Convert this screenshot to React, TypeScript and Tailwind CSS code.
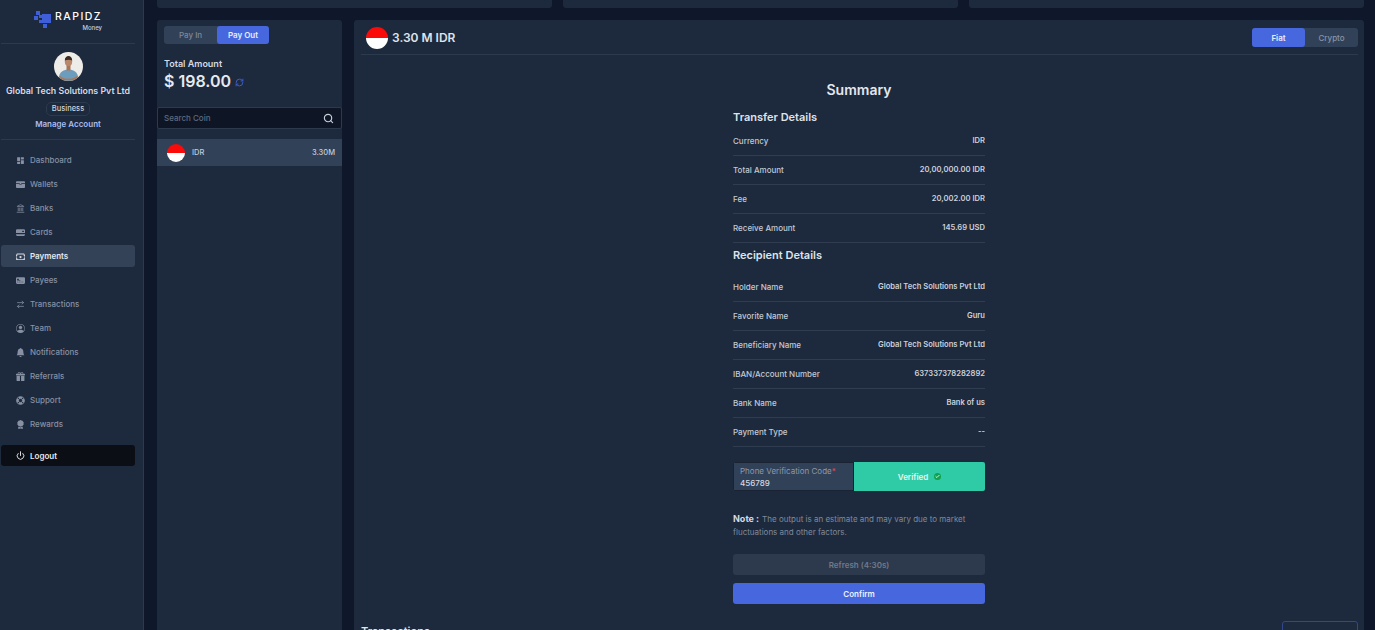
import { Check, Landmark, Power, RefreshCw, Search, ArrowRightLeft } from 'lucide-react';
import { BsCreditCard2BackFill, BsCreditCard2FrontFill, BsBellFill, BsGiftFill, BsWalletFill, BsCashStack, BsPersonCircle, BsAwardFill } from 'react-icons/bs';
import { FaLifeRing } from 'react-icons/fa';
import { RiDashboardFill } from 'react-icons/ri';

const NAV = [
  { label: 'Dashboard', icon: RiDashboardFill },
  { label: 'Wallets', icon: BsWalletFill },
  { label: 'Banks', icon: Landmark },
  { label: 'Cards', icon: BsCreditCard2BackFill },
  { label: 'Payments', icon: BsCashStack, active: true },
  { label: 'Payees', icon: BsCreditCard2FrontFill },
  { label: 'Transactions', icon: ArrowRightLeft },
  { label: 'Team', icon: BsPersonCircle },
  { label: 'Notifications', icon: BsBellFill },
  { label: 'Referrals', icon: BsGiftFill },
  { label: 'Support', icon: FaLifeRing },
  { label: 'Rewards', icon: BsAwardFill },
];

const TRANSFER = [
  ['Currency', 'IDR'],
  ['Total Amount', '20,00,000.00 IDR'],
  ['Fee', '20,002.00 IDR'],
  ['Receive Amount', '145.69 USD'],
];

const RECIPIENT = [
  ['Holder Name', 'Global Tech Solutions Pvt Ltd'],
  ['Favorite Name', 'Guru'],
  ['Beneficiary Name', 'Global Tech Solutions Pvt Ltd'],
  ['IBAN/Account Number', '637337378282892'],
  ['Bank Name', 'Bank of us'],
  ['Payment Type', '--'],
];

function Flag({ size }: { size: 'sm' | 'lg' }) {
  return (
    <div className={`flex shrink-0 flex-col overflow-hidden rounded-full ${size === 'lg' ? 'h-[22px] w-[22px]' : 'h-[18px] w-[18px]'}`}>
      <div className="flex-1 bg-[#fb0a0a]" />
      <div className="flex-1 bg-white" />
    </div>
  );
}

function Logo() {
  return (
    <div className="mx-[1px] flex h-[44px] w-[134px] items-start justify-center border-b border-[#2b3a4e] pt-[10px]">
      <svg width="20" height="20" viewBox="0 0 20 20" className="mr-[1px]">
        <g fill="#3f5fd8">
          <rect x="2" y="1" width="4" height="4" />
          <rect x="0" y="6" width="4" height="4" />
          <rect x="5" y="5" width="3" height="3" />
          <rect x="8" y="4" width="9" height="9" />
          <rect x="5" y="10" width="3" height="3" />
          <rect x="9" y="14" width="4" height="4" />
        </g>
      </svg>
      <div className="flex flex-col items-end pt-[1px]">
        <span className="text-[10.500px] font-medium leading-[12px] tracking-[1.500px] text-white">RAPIDZ</span>
        <span className="mt-[1px] text-[6px] font-medium leading-[8px] text-[#cbd2dc]">Money</span>
      </div>
    </div>
  );
}

function Avatar() {
  return (
    <svg width="29" height="29" viewBox="0 0 29 29" className="rounded-full">
      <rect width="29" height="29" fill="#eeece8" />
      <path d="M5 29c-1-7 2-11 9.500-11.500C22 18 25 22 24 29z" fill="#6d9dbd" />
      <rect x="12.500" y="13" width="4" height="5.500" fill="#a8775a" />
      <ellipse cx="14.500" cy="9.500" rx="3.700" ry="4.500" fill="#b98769" />
      <path d="M10.800 8.500c0-3 1.700-4.500 3.700-4.500s3.700 1.500 3.700 4.500c-2-1-5.400-1-7.400 0z" fill="#3b2b22" />
      <path d="M6 24c3 2.500 6 3 8.500 2.500 3 .5 6-.5 8.500-2.500l1 2.500c-3 2.500-7 2.500-9.500 1.800-3 .7-6.500.7-9.500-1.800z" fill="#a8775a" />
    </svg>
  );
}

function Sidebar() {
  return (
    <aside className="flex h-full w-[144px] shrink-0 flex-col border-r border-[#2b3a4e] bg-slate-800">
      <Logo />
      <div className="mx-[1px] flex h-[96px] w-[134px] flex-col items-center border-b border-[#2b3a4e] pt-[8px]">
        <Avatar />
        <div className="mt-[3px] whitespace-nowrap text-[8.800px] font-semibold leading-[14px] text-[#d5dae2]">Global Tech Solutions Pvt Ltd</div>
        <div className="mt-[4px] flex h-[14px] items-center rounded-[5px] border border-[#2b3a4e] px-[5px] text-[7.500px] font-medium text-[#cfd5de]">Business</div>
        <div className="mt-[2px] text-[8px] font-semibold leading-[12px] text-[#a9bdf2]">Manage Account</div>
      </div>
      <nav className="mt-[9px] flex flex-col gap-[2px] pl-[1px]">
        {NAV.map((item) => (
          <div
            key={item.label}
            className={`flex h-[22px] w-[134px] items-center gap-[5px] rounded-[3px] pl-[15px] text-[8px] font-medium ${
              item.active ? 'bg-[#344258] font-semibold text-[#e4e8ee]' : 'text-[#8791a3]'
            }`}
          >
            <item.icon size={9} className={item.active ? 'text-[#d5dae2]' : 'text-[#8791a3]'} />
            <span>{item.label}</span>
          </div>
        ))}
      </nav>
      <div className="ml-[1px] mt-[10px] flex h-[21px] w-[134px] items-center gap-[5px] rounded-[3px] bg-[#0b0e14] pl-[15px] text-[8px] font-semibold text-[#e9ebef]">
        <Power size={9} strokeWidth={2.500} />
        <span>Logout</span>
      </div>
    </aside>
  );
}

function CoinPanel() {
  return (
    <div className="flex w-[185px] shrink-0 flex-col rounded-t-[3px] bg-slate-800">
      <div className="ml-[7px] mt-[6px] flex h-[18px] w-[105px] rounded-[3px] bg-slate-700 text-[8px] font-medium">
        <div className="flex w-[53px] items-center justify-center text-[#7d889b]">Pay In</div>
        <div className="flex flex-1 items-center justify-center rounded-[3px] bg-[#4667de] font-semibold text-[#e8edfb]">Pay Out</div>
      </div>
      <div className="ml-[7px] mt-[14px] text-[9px] font-semibold leading-[12px] text-[#d5dae2]">Total Amount</div>
      <div className="ml-[7px] flex items-center gap-[4px]">
        <span className="text-[16px] font-semibold leading-[22px] text-[#e6e9ee]">$ 198.00</span>
        <RefreshCw size={9} strokeWidth={2.500} className="mt-[2px] text-[#3f5fd0]" />
      </div>
      <div className="mt-[15px] flex h-[22px] items-center justify-between rounded-[2px] border border-[#2d3a4e] bg-[#0e1626] pl-[6px] pr-[7px]">
        <span className="text-[8px] font-medium text-[#5e6a7d]">Search Coin</span>
        <Search size={11} strokeWidth={2.500} className="text-[#c8ced8]" />
      </div>
      <div className="mt-[10px] flex h-[27px] items-center bg-slate-700 pl-[10px] pr-[7px]">
        <Flag size="sm" />
        <span className="ml-[7px] text-[7.500px] font-medium text-[#c5cbd6]">IDR</span>
        <span className="ml-auto text-[7.500px] font-medium text-[#c5cbd6]">3.30M</span>
      </div>
    </div>
  );
}

function DetailRow({ label, value }: { label: string; value: string }) {
  return (
    <div className="flex h-[29px] items-center justify-between border-b border-[#303c4f] text-[8px] font-medium leading-[12px]">
      <span className="text-[#c3c9d3]">{label}</span>
      <span className="text-[7.600px] font-semibold leading-[12px] text-[#ccd1da]">{value}</span>
    </div>
  );
}

function Summary() {
  return (
    <div className="ml-[372px] mt-[25px] flex w-[252px] flex-col">
      <h2 className="text-center text-[14px] font-semibold leading-[20px] text-[#e3e7ed]">Summary</h2>
      <h3 className="mt-[9px] text-[11px] font-semibold leading-[16px] text-[#dfe3ea]">Transfer Details</h3>
      <div className="mt-[2px]">
        {TRANSFER.map(([label, value]) => (
          <DetailRow key={label} label={label} value={value} />
        ))}
      </div>
      <h3 className="mt-[4px] text-[11px] font-semibold leading-[16px] text-[#dfe3ea]">Recipient Details</h3>
      <div className="mt-[10px]">
        {RECIPIENT.map(([label, value]) => (
          <DetailRow key={label} label={label} value={value} />
        ))}
      </div>
      <div className="mt-[15px] flex h-[29px] overflow-hidden rounded-[2px]">
        <div className="flex w-[121px] flex-col justify-center border border-[#1a2333] bg-slate-700 pl-[6px]">
          <span className="text-[8px] font-normal leading-[12px] text-[#8e98a9]">
            Phone Verification Code<span className="text-[#e5484d]">*</span>
          </span>
          <span className="text-[8px] font-medium leading-[12px] text-[#d5dae2]">456789</span>
        </div>
        <div className="flex flex-1 items-center justify-center gap-[6px] bg-[#2fcba6] text-[8px] font-semibold text-[#e8f6f2]">
          Verified
          <span className="flex h-[7px] w-[7px] items-center justify-center rounded-full bg-[#12a150]">
            <Check size={5} strokeWidth={4} className="text-white" />
          </span>
        </div>
      </div>
      <div className="mt-[21px] text-[8px] leading-[13px] text-[#7f8a9b]">
        <div>
          <span className="mr-[3px] text-[9px] font-bold text-[#d5dae2]">Note :</span>
          <span>The output is an estimate and may vary due to market</span>
        </div>
        <div>fluctuations and other factors.</div>
      </div>
      <div className="mt-[15px] flex h-[21px] items-center justify-center rounded-[3px] bg-[#2d394c] text-[8px] font-semibold text-[#6f7a8c]">Refresh (4:30s)</div>
      <div className="mt-[8px] flex h-[21px] items-center justify-center rounded-[3px] bg-[#4667de] text-[8px] font-semibold text-[#eef1fc]">Confirm</div>
    </div>
  );
}

function MainCard() {
  return (
    <div className="flex flex-1 flex-col rounded-t-[3px] bg-slate-800 pl-[7px] pr-[6px] pt-[7px]">
      <div className="flex h-[28px] shrink-0 items-start justify-between border-b border-[#2d3a4e] pl-[5px]">
        <div className="flex items-center gap-[4px]">
          <Flag size="lg" />
          <span className="text-[12px] font-semibold leading-[22px] text-[#dfe3ea]">3.30 M IDR</span>
        </div>
        <div className="mt-[1px] flex h-[19px] w-[106px] rounded-[3px] bg-slate-700 text-[8px] font-medium">
          <div className="flex w-[53px] items-center justify-center rounded-[3px] bg-[#4667de] font-semibold text-[#e8edfb]">Fiat</div>
          <div className="flex flex-1 items-center justify-center text-[#8a94a6]">Crypto</div>
        </div>
      </div>
      <Summary />
      <div className="mt-[19px] flex items-start justify-between">
        <h3 className="text-[11px] font-semibold leading-[16px] text-[#dfe3ea]">Transactions</h3>
        <div className="mt-[-2px] h-[24px] w-[76px] rounded-[3px] border border-[#33478c]" />
      </div>
    </div>
  );
}

export default function App() {
  return (
    <div className="flex h-[630px] w-[1375px] overflow-hidden bg-slate-900 font-['Inter',sans-serif]">
      <Sidebar />
      <main className="flex min-w-0 flex-1 flex-col gap-[12px] pl-[13px] pr-[11px]">
        <div className="flex h-[8px] shrink-0 gap-[11px]">
          <div className="flex-1 rounded-b-[3px] bg-slate-800" />
          <div className="flex-1 rounded-b-[3px] bg-slate-800" />
          <div className="flex-1 rounded-b-[3px] bg-slate-800" />
        </div>
        <div className="flex min-h-0 flex-1 gap-[12px]">
          <CoinPanel />
          <MainCard />
        </div>
      </main>
    </div>
  );
}
